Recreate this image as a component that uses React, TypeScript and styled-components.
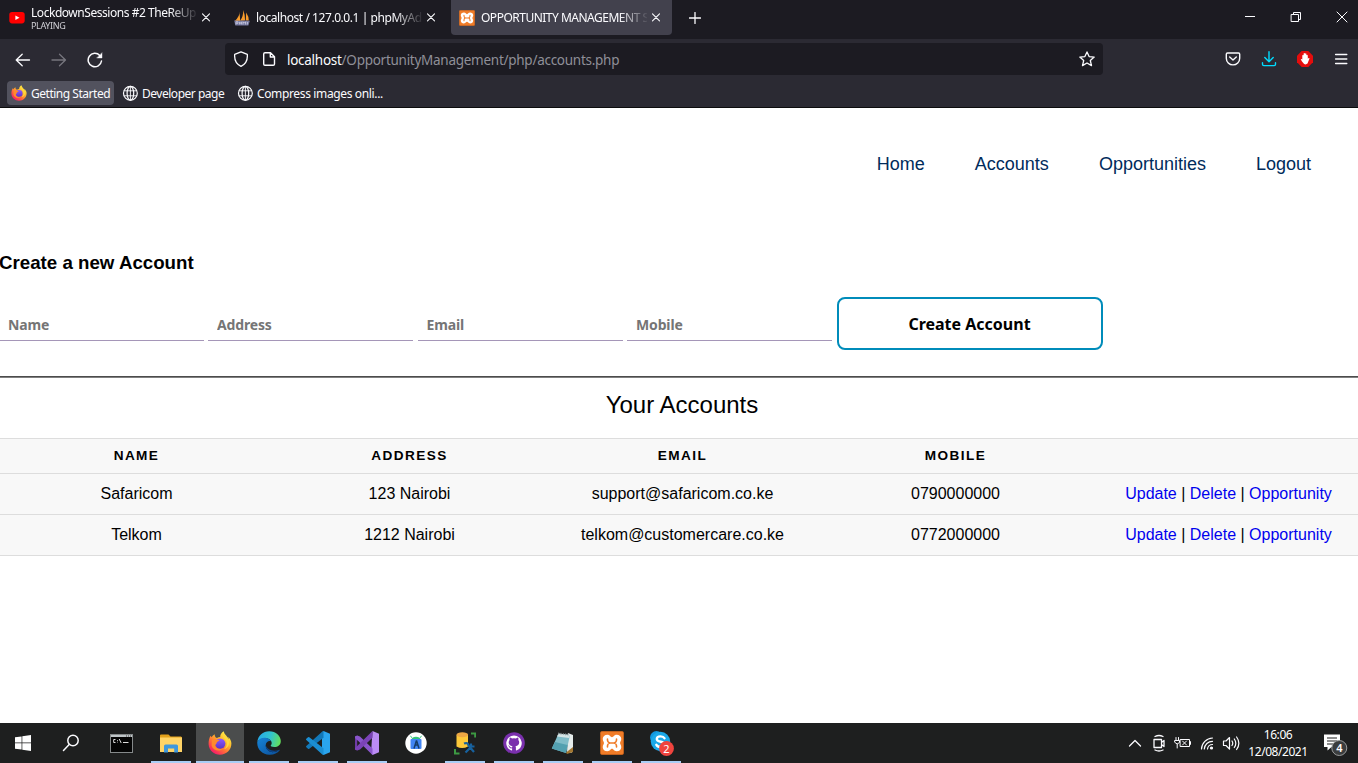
import React from "react";
import styled, { createGlobalStyle } from "styled-components";

const ui = `"Noto Sans", "Open Sans", sans-serif`;
const arial = `"Liberation Sans", Arial, sans-serif`;

const GlobalStyle = createGlobalStyle`
  *, *::before, *::after { box-sizing: border-box; }
  html, body { margin: 0; padding: 0; overflow: hidden; background: #fff; }
  svg { display: block; flex: none; }
`;

const Screen = styled.div`
  width: 1358px;
  height: 763px;
  display: flex;
  flex-direction: column;
  overflow: hidden;
  font-family: ${ui};
`;

/* ---------- browser chrome ---------- */

const Label = styled.span<{ $track?: number }>`
  white-space: pre;
  letter-spacing: ${(p) => p.$track ?? 0}px;
`;

const TabStrip = styled.div`
  height: 39px;
  flex: none;
  display: flex;
  justify-content: space-between;
  background: #1c1b22;
  color: #fbfbfe;
`;

const Tabs = styled.div`
  display: flex;
  gap: 4px;
  padding-left: 1px;
`;

const Tab = styled.div<{ $active?: boolean }>`
  width: 221px;
  height: 35px;
  padding: 0 9px 0 8px;
  display: flex;
  align-items: center;
  border-radius: 0 0 4px 4px;
  background: ${(p) => (p.$active ? "#42414d" : "transparent")};
  font-size: 12px;
`;

const TabText = styled.div<{ $fade: number }>`
  width: 166px;
  height: 35px;
  margin: 0 4px 0 6px;
  display: flex;
  flex-direction: column;
  justify-content: center;
  overflow: hidden;
  line-height: 15px;
  mask-image: linear-gradient(to right, #000 ${(p) => 166 - p.$fade}px, transparent 168px);
`;

const TabNote = styled.span`
  font-size: 9px;
  line-height: 11px;
  letter-spacing: -0.35px;
  color: #d0d0d6;
`;

const NewTab = styled.div`
  width: 37px;
  height: 35px;
  display: grid;
  place-items: center;
`;

const WindowButtons = styled.div`
  display: flex;
  align-items: center;
  gap: 34px;
  padding: 0 10px 5px 0;
`;

const NavBar = styled.div`
  height: 40px;
  flex: none;
  display: flex;
  align-items: center;
  background: #2b2a33;
  color: #fbfbfe;
`;

const NavButtons = styled.div`
  width: 225px;
  padding: 1px 0 0 15px;
  display: flex;
  gap: 20px;
`;

const UrlBar = styled.div`
  width: 878px;
  height: 32px;
  padding: 0 8px;
  display: flex;
  align-items: center;
  border-radius: 4px;
  background: #1c1b22;
`;

const Url = styled.div`
  flex: 1;
  padding: 1px 0 0 10px;
  font-size: 13.5px;
  color: #8f8f98;
  em { font-style: normal; color: #fbfbfe; }
`;

const Spacer = styled.div<{ $w: number }>`
  width: ${(p) => p.$w}px;
  flex: none;
`;

const NavActions = styled.div`
  flex: 1;
  padding-right: 9px;
  display: flex;
  justify-content: flex-end;
  gap: 20px;
`;

const Bookmarks = styled.div`
  height: 29px;
  flex: none;
  display: flex;
  align-items: flex-start;
  padding: 2px 0 0 7px;
  border-bottom: 1px solid #0c0c0d;
  background: #2b2a33;
  color: #fbfbfe;
  font-size: 12px;
`;

const Bookmark = styled.div<{ $w: number; $active?: boolean }>`
  width: ${(p) => p.$w}px;
  height: 24px;
  padding-left: 4px;
  display: flex;
  align-items: center;
  gap: 4px;
  border-radius: 4px;
  background: ${(p) => (p.$active ? "#52525e" : "transparent")};
`;

/* ---------- page ---------- */

const Page = styled.main`
  height: 615px;
  flex: none;
  overflow: hidden;
  background: #fff;
  color: #000;
  font-family: ${arial};
`;

const SiteNav = styled.nav`
  height: 112px;
  padding: 1px 47px 0 0;
  display: flex;
  justify-content: flex-end;
  align-items: center;
  gap: 50px;
  font-size: 18px;
  color: #002b5b;
`;

const FormTitle = styled.h3`
  margin: 32px 0 0 -1px;
  height: 22px;
  line-height: 22px;
  font-size: 18.72px;
`;

const AccountForm = styled.form`
  height: 79px;
  margin: 23px 0 0;
  display: flex;
  font-family: ${ui};
`;

const Field = styled.input`
  width: 205px;
  height: 32px;
  margin: 12px 4.5px 0 0;
  padding: 0 9px;
  border: 0;
  border-bottom: 1px solid #a596b8;
  outline: 0;
  background: transparent;
  font: 700 14px ${ui};
  letter-spacing: -0.15px;
  &:first-child { width: 204px; margin-right: 4px; padding: 0 8px; }
  &::placeholder { color: #757575; opacity: 1; }
`;

const SubmitButton = styled.button`
  width: 266px;
  height: 53px;
  border: 2px solid #008cba;
  border-radius: 8px;
  background: #fff;
  color: #000;
  font: 700 16px ${ui};
`;

const Rule = styled.hr`
  height: 2px;
  margin: 0;
  border: 0;
  border-top: 1px solid #4c4c4c;
  border-bottom: 1px solid #808080;
`;

const AccountsTable = styled.table`
  width: 1365px;
  table-layout: fixed;
  border-collapse: collapse;
  text-align: center;
  font-size: 16px;
  caption {
    height: 60px;
    padding-bottom: 6px;
    line-height: 54px;
    font-size: 24px;
    width: 1364px;
  }
  tr { background: #f8f8f8; border: solid #ddd; border-width: 1px 0; }
  th, td { padding: 0; }
  th {
    height: 35px;
    padding-bottom: 2px;
    font-size: 13.6px;
    letter-spacing: 1.4px;
    text-transform: uppercase;
  }
  td { height: 41px; padding-bottom: 1px; }
  a { color: #0000ee; text-decoration: none; }
`;

/* ---------- taskbar ---------- */

const Taskbar = styled.footer`
  height: 40px;
  flex: none;
  display: flex;
  background: #1e1f1f;
  color: #fff;
`;

const TaskButton = styled.div<{ $w?: number; $active?: boolean; $open?: boolean }>`
  width: ${(p) => p.$w ?? 48}px;
  height: 40px;
  margin-right: 1px;
  display: flex;
  flex-direction: column;
  align-items: center;
  background: ${(p) => (p.$active ? "#4b4d4d" : "transparent")};
  &::after {
    content: "";
    width: ${(p) => (p.$active ? 48 : 40)}px;
    height: 2px;
    background: ${(p) => (p.$open ? "#a9cdf5" : "transparent")};
  }
`;

const TaskIcon = styled.div`
  height: 38px;
  padding-top: 2px;
  display: grid;
  place-items: center;
`;

const Tray = styled.div`
  flex: 1;
  padding-right: 9px;
  display: flex;
  align-items: center;
  justify-content: flex-end;
`;

const TrayIcons = styled.div`
  display: flex;
  gap: 4px;
`;

const Clock = styled.div`
  width: 74px;
  text-align: center;
  font-size: 12px;
  line-height: 17px;
  letter-spacing: -0.45px;
  padding-bottom: 1px;
`;

/* ---------- icons ---------- */

type LineProps = { size?: number; box?: number; color?: string; width?: number; children: React.ReactNode };
const Line = ({ size = 16, box = 16, color = "#fbfbfe", width = 1.3, children }: LineProps) => (
  <svg width={size} height={size} viewBox={`0 0 ${box} ${box}`} fill="none" stroke={color} strokeWidth={width} strokeLinecap="round" strokeLinejoin="round">
    {children}
  </svg>
);

const CloseIcon = () => (
  <Line size={10} box={10} width={1.1}><path d="M1.5 0.9l7 7M8.5 0.9l-7 7" /></Line>
);

const YouTubeIcon = () => (
  <svg width="16" height="16" viewBox="0 0 16 16">
    <rect x="0.3" y="2" width="15.4" height="11.4" rx="2.8" fill="#f00" />
    <path d="M6.4 5.4v4.6L10.5 7.7z" fill="#fff" />
  </svg>
);

const PhpMyAdminIcon = () => (
  <svg width="16" height="16" viewBox="0 0 16 16">
    <path d="M5.5 1.5Q6 6 .8 11h5.400zM9.200 0Q9.500 6 6.200 10.800l4.900-.3Q11.200 5 9.200 0zM12.200 2.500q2.600 4 2.600 8h-3z" fill="#f89c2c" />
    <path d="M.2 10.600l15.600.1-1.400 4.900H1.300z" fill="#74779e" />
    <path d="M2 14.500v-2.700h2v1.500H2.300M5.600 11.800v2.600M7.400 11.800v2.600M5.600 13h1.800M9 14.500v-2.700l1.300 1.300 1.300-1.300v2.700M13.400 12v2.500" fill="none" stroke="#d0d1e4" strokeWidth=".8" />
  </svg>
);

const XamppIcon = ({ size = 16 }: { size?: number }) => (
  <svg width={size} height={size} viewBox="0 0 24 24">
    <rect x=".3" y=".3" width="23.4" height="23.4" rx="2" fill="#f07c28" stroke="#ca5f16" strokeWidth=".6" />
    <g transform="translate(12 12) scale(1.22) translate(-12 -12)">
      <path d="M8.2 5.300c2.300 0 2.500 2 3.800 2s1.500-2 3.800-2c2.200 0 3.800 1.400 3.800 3.300 0 1.800-1 2.300-1 3.400s1 1.600 1 3.400c0 1.900-1.600 3.300-3.800 3.300-2.300 0-2.500-2-3.800-2s-1.500 2-3.800 2c-2.200 0-3.800-1.400-3.800-3.300 0-1.800 1-2.300 1-3.400s-1-1.600-1-3.400c0-1.900 1.600-3.300 3.800-3.300z" fill="#fff" />
      <path d="M8.300 8.700v.9c0 1.200 1 2.400 2.200 2.400-1.200 0-2.200 1.200-2.200 2.400v.9M15.700 8.700v.9c0 1.200-1 2.400-2.200 2.400 1.200 0 2.200 1.200 2.200 2.400v.9M10.500 12h3" fill="none" stroke="#f07c28" strokeWidth="1.300" strokeLinecap="round" />
    </g>
  </svg>
);

const FirefoxIcon = ({ size, id }: { size: number; id: string }) => (
  <svg width={size} height={size} viewBox="0 0 24 24">
    <defs>
      <linearGradient id={`${id}a`} x1=".85" y1=".1" x2=".2" y2=".95">
        <stop offset="0" stopColor="#fff04a" /><stop offset=".35" stopColor="#ffb72b" />
        <stop offset=".65" stopColor="#ff6a3a" /><stop offset="1" stopColor="#f5156c" />
      </linearGradient>
      <linearGradient id={`${id}b`} x1="0" y1="0" x2="0" y2="1">
        <stop offset="0" stopColor="#9059ff" /><stop offset="1" stopColor="#5b34c4" />
      </linearGradient>
    </defs>
    <path d="M22.500 9c-.5-1.300-1.600-2.700-2.400-3.100.5 1 .8 1.900.9 2.700C19.700 5.400 16.500 4 15.600.3c-2.300 1.300-3.500 4-3.400 5.600-1.200.1-2.200.5-3.200 1.100C7 6.500 6.600 4.300 6.700 3.200 5.200 4 4 5.400 3.700 6.200L2.500 4.800C1.300 7 .5 10 .6 13.200.9 19.300 6 23.700 12 23.700c6.400 0 11.400-4.800 11.400-11.200 0-1.300-.3-2.500-.9-3.500z" fill={`url(#${id}a)`} />
    <circle cx="12.200" cy="12.600" r="5.200" fill={`url(#${id}b)`} />
    <path d="M4 8.500c3-1 4.300.4 7.500.5-.5 1.300-2 1.500-2.600 2.300-.3 1.800-1.200 1.800-1.800 3.200 1 3.400 5.500 4.500 8.400 2.400-3.500 4.500-10.500 2.800-11.900-2.500z" fill="#ff8a2c" />
    <path d="M14.200 2.500c-.4 4.500 5 5.200 4.700 10.300 0 2-1 4-3 5.200 5.700-1 6.500-7.700 3.600-11-2-2.200-4.200-2.300-5.300-4.500z" fill="#ffd83c" />
  </svg>
);

const GlobeIcon = () => (
  <Line width={1.2}><circle cx="8.400" cy="8.300" r="6.900" /><ellipse cx="8.400" cy="8.300" rx="3.300" ry="6.900" /><path d="M2.100 5.800h12.600M2.100 10.800h12.600M8.400 1.400v13.800" strokeWidth=".9" /></Line>
);

const WindowsIcon = () => (
  <svg width="16" height="16" viewBox="0 0 16 16" fill="#fff">
    <path d="M0 2.300l6.600-.9v6.200H0zM7.300 1.300L16 0v7.600H7.300zM0 8.300h6.600v6.300L0 13.700zM7.300 8.300H16V16l-8.700-1.300z" />
  </svg>
);

const TerminalIcon = () => (
  <svg width="23" height="19" viewBox="0 0 23 19">
    <rect x=".5" y=".5" width="22" height="18" fill="#050505" stroke="#85898a" />
    <path d="M1 1h21v2H1z" fill="#c0c6c8" />
    <path d="M16 2h1M18 2h1M20 2h1" stroke="#444" />
    <path d="M5.500 5.500H3.700v3h1.800M7.500 6v.8M7.500 7.800v.6M9.200 5l2 4M13 8.500h5.500" fill="none" stroke="#ddd" />
  </svg>
);

const ExplorerIcon = () => (
  <svg width="22" height="19" viewBox="0 0 22 19">
    <path d="M0 1.500Q0 .5 1 .5h7.500l2 2H21l1 1V8H0z" fill="#e3a11b" />
    <path d="M0 3.500h22V18H0z" fill="#ffd467" />
    <path d="M4 18.500V12q0-1.500 1.500-1.500h11Q18 10.500 18 12v6.500h-3.800v-4H8v4z" fill="#3f98dc" />
  </svg>
);

const EdgeIcon = () => (
  <svg width="24" height="24" viewBox="0 0 24 24">
    <defs>
      <linearGradient id="edgeTop" x1="0" y1=".3" x2="1" y2=".5"><stop offset="0" stopColor="#27a9e8" /><stop offset=".55" stopColor="#32c4cd" /><stop offset="1" stopColor="#63df5b" /></linearGradient>
      <linearGradient id="edgeLow" x1="0" y1="0" x2="1" y2="1"><stop offset="0" stopColor="#1684d8" /><stop offset="1" stopColor="#0c4f99" /></linearGradient>
    </defs>
    <path d="M.3 11C1 4.500 6 .2 12.200.2 19 .2 23.800 5 23.800 10c0 4-3 6-6.500 6-2.700 0-3.800-.8-3.600-1.500.2-.6 1-1 1-2.600 0-2.500-2.500-4.700-6.200-4.700C4 7.200 1.500 9 .3 11z" fill="url(#edgeTop)" />
    <path d="M.3 11C1.500 8 5 6.500 8.300 6.700c3 .2 5 1.800 5.800 3.600-2.500-1-5.500.8-5.400 4.200.1 4.500 4.800 7.300 8.300 6.600 1.800-.3 3.500-1 4.900-2.200.5-.4.9.1.6.6-2 2.700-5.700 4.500-10.300 4.300C5.500 23.500-.3 18.500.3 11z" fill="url(#edgeLow)" />
    <path d="M8.700 14.500c-.1 4.500 4.800 7.300 8.300 6.600 2-.3 3.700-1.200 4.900-2.200-5.500 1.700-11 .5-13.200-4.400z" fill="#0b4388" />
  </svg>
);

const VsCodeIcon = () => (
  <svg width="24" height="24" viewBox="0 0 24 24">
    <path d="M17.500 0L24 2.800v18.400L17.500 24 16 22.500V1.500z" fill="#2aa5ee" />
    <path d="M17.500 0v6.800L3.300 17.700q-.6.500-1.300 0L.3 16.200q-.6-.7 0-1.300L16.300.5z" fill="#1278b8" />
    <path d="M17.500 24v-6.800L3.300 6.300Q2.700 5.800 2 6.300L.3 7.800q-.6.700 0 1.300l16 14.400z" fill="#1b8ed2" />
  </svg>
);

const VisualStudioIcon = () => (
  <svg width="24" height="24" viewBox="0 0 24 24">
    <path d="M17.500 0L24 2.800v18.400L17.500 24 16 22z" fill="#bb8cf4" />
    <path d="M0 5.500l2.200-1v15L0 18.500z" fill="#6f3ba6" />
    <path d="M0 5.500l2.200-1L5 5.500l12.500 12V24L2.200 9v.3L0 7z" fill="#8a55cb" />
    <path d="M0 18.500l2.200 1 2.800-1L17.500 6.800V0L2.200 15 0 17z" fill="#7b43b7" />
  </svg>
);

const AndroidStudioIcon = () => (
  <svg width="22" height="22" viewBox="0 0 22 22">
    <circle cx="11" cy="11" r="10.700" fill="#fff" />
    <path d="M5.500 3.800l1.300 2M16.500 3.800l-1.300 2" stroke="#35c47b" />
    <path d="M6.300 8a4.800 4 0 019.400 0z" fill="#35c47b" />
    <rect x="5.500" y="7" width="11" height="10" rx="1" fill="#4285f4" />
    <path d="M11.500 8.500L9 16.500M11.500 8.500l2.500 8M10 13h3.500" stroke="#163d68" strokeWidth="1.500" fill="none" />
  </svg>
);

const DatabaseIcon = () => (
  <svg width="22" height="23" viewBox="0 0 22 23">
    <path d="M17 1.500h4.200v4M1 17v4.500h4.500" fill="none" stroke="#3c9a43" strokeWidth="2" />
    <path d="M2.500 3v11.500q5.500 3 11.500 0V3z" fill="#fdc93a" />
    <ellipse cx="8.300" cy="2.800" rx="5.800" ry="2.500" fill="#eda744" />
    <path d="M11.500 20.500l7-7M10 11.500q4-1.500 4.500 2l5.500 6.500M17 11.500v3h3.500" fill="none" stroke="#17619e" strokeWidth="2.200" />
  </svg>
);

const GithubIcon = () => (
  <svg width="22" height="22" viewBox="0 0 22 22">
    <circle cx="11" cy="11" r="10.800" fill="#7a30ad" />
    <path d="M11 3.500a7.700 7.700 0 00-2.500 15c.5.100.6-.2.6-.5v-1.700c-2 .4-2.700-.6-3.100-1.700-.2-.4-.7-.8-1-1 1-.2 1.600.6 2 1.200.6 1 1.400.8 2.100.5 0-.500.200-.900.400-1.100-2.500-.4-3.800-1.700-3.800-4 0-.9.400-1.700.9-2.300-.2-.8-.1-1.600.2-2.300.8 0 1.600.500 2.200.9a8 8 0 014 0c.7-.5 1.400-.9 2.200-.9.300.8.300 1.600.1 2.300.6.600.9 1.400.9 2.300 0 2.300-1.300 3.600-3.800 4 .3.300.5.700.5 1.500V18c0 .3.200.6.600.5A7.700 7.700 0 0011 3.500z" fill="#fff" />
  </svg>
);

const NotepadIcon = () => (
  <svg width="24" height="23" viewBox="0 0 24 23">
    <path d="M17 1l5 2v16.500l-2 1.500-4-1z" fill="#e6eceb" />
    <path d="M22 15v5l-6 2-1-1.500z" fill="#a17631" />
    <path d="M7.500 1.500L19 3l-4 18L.8 16.500z" fill="#80bcc8" />
    <path d="M7.500 1.500L19 3l-.8 3L6 4.500z" fill="#d5e4e5" />
    <path d="M7.700.5v2M10 .8v2M12.300 1v2M14.600 1.300v2M17 1.500v2" stroke="#8b9192" strokeWidth=".8" />
    <path d="M4 10l12.500 3L15 21 .8 16.500z" fill="#53a0b0" />
  </svg>
);

const SkypeIcon = () => (
  <svg width="26" height="26" viewBox="0 0 26 26">
    <circle cx="8.500" cy="7.500" r="6.500" fill="#1197df" />
    <circle cx="16" cy="16" r="7" fill="#1197df" />
    <circle cx="12.500" cy="11.500" r="9.700" fill="#1ba8e8" />
    <path d="M16.500 8.300Q15.500 6.400 12.500 6.400c-2.200 0-3.700 1-3.700 2.600 0 3.800 7.600 1.800 7.600 5.300 0 1.600-1.500 2.700-3.900 2.700q-3.200 0-4.200-2.200" fill="none" stroke="#fff" strokeWidth="2.400" strokeLinecap="round" />
    <circle cx="18.500" cy="18.500" r="7.400" fill="#f0443e" />
    <text x="18.500" y="22.500" textAnchor="middle" fontSize="11" fontFamily="Noto Sans" fill="#fff">2</text>
  </svg>
);

const ActionCenterIcon = () => (
  <svg width="26" height="26" viewBox="0 0 26 26">
    <path d="M1 4.500h16v12.500H8.500L4.500 20.500V17H1z" fill="#fff" />
    <path d="M4 8h10M4 11h10M4 14h7" stroke="#1e1f1f" strokeWidth="1.100" />
    <circle cx="16.300" cy="18" r="7.500" fill="#3b3d3e" stroke="#9a9c9c" />
    <text x="16.300" y="22" textAnchor="middle" fontSize="11" fontWeight="600" fontFamily="Noto Sans" fill="#fff">4</text>
  </svg>
);

/* ---------- data ---------- */

const accounts = [
  { name: "Safaricom", address: "123 Nairobi", email: "support@safaricom.co.ke", mobile: "0790000000" },
  { name: "Telkom", address: "1212 Nairobi", email: "telkom@customercare.co.ke", mobile: "0772000000" },
];

const openApps = [
  { key: "files", icon: <ExplorerIcon />, open: true },
  { key: "firefox", icon: <FirefoxIcon size={24} id="fxTask" />, open: true, active: true },
  { key: "edge", icon: <EdgeIcon />, open: true },
  { key: "code", icon: <VsCodeIcon />, open: true },
  { key: "vs", icon: <VisualStudioIcon />, open: true },
  { key: "android", icon: <AndroidStudioIcon />, open: false },
  { key: "db", icon: <DatabaseIcon />, open: true },
  { key: "github", icon: <GithubIcon />, open: true },
  { key: "notepad", icon: <NotepadIcon />, open: true },
  { key: "xampp", icon: <XamppIcon size={24} />, open: true },
  { key: "skype", icon: <SkypeIcon />, open: true },
];

export default function App() {
  return (
    <Screen>
      <GlobalStyle />
      <TabStrip>
        <Tabs>
          <Tab>
            <YouTubeIcon />
            <TabText $fade={28}>
              <Label $track={-0.46}>LockdownSessions #2 TheReUp</Label>
              <TabNote>PLAYING</TabNote>
            </TabText>
            <CloseIcon />
          </Tab>
          <Tab>
            <PhpMyAdminIcon />
            <TabText $fade={28}><Label $track={-0.44}>localhost / 127.0.0.1 | phpMyAdmin</Label></TabText>
            <CloseIcon />
          </Tab>
          <Tab $active>
            <XamppIcon />
            <TabText $fade={28}><Label $track={-0.5}>OPPORTUNITY MANAGEMENT SYSTEM</Label></TabText>
            <CloseIcon />
          </Tab>
          <NewTab><Line size={12} box={12}><path d="M6 .5v11M.5 6h11" /></Line></NewTab>
        </Tabs>
        <WindowButtons>
          <Line size={12} box={12} width={1}><path d="M1 5.500h10" strokeLinecap="butt" /></Line>
          <Line size={12} box={12} width={1}><path d="M1.500 3.500h7v7h-7zM3.500 3.500v-2h7v7h-2" /></Line>
          <Line size={12} box={12} width={1}><path d="M1 1l10 10M11 1L1 11" /></Line>
        </WindowButtons>
      </TabStrip>

      <NavBar>
        <NavButtons>
          <Line><path d="M14.500 8H1.200M7.200 2.200L1.200 8l6 5.800" /></Line>
          <Line color="#77767e"><path d="M1 8h13.500M8.500 2.200l6 5.800-6 5.800" /></Line>
          <Line width={1.500}><path d="M14.500 9A6.700 6.700 0 1112.800 3.500" /><path d="M15 1v5h-5z" fill="#fbfbfe" strokeWidth=".4" /></Line>
        </NavButtons>
        <UrlBar>
          <Line><path d="M8 .8l6.300 2.500c.5 5.500-1.500 9.700-6.300 12C3.200 13 1.200 8.800 1.700 3.300z" /></Line>
          <Spacer $w={12} />
          <Line width={1.400}><path d="M4 1.700h5.500l4 4V13q0 1.300-1.300 1.300H4Q2.700 14.300 2.700 13V3Q2.700 1.700 4 1.700zM9.300 2v4h4" /></Line>
          <Url><Label $track={-0.27}><em>localhost</em>/OpportunityManagement/php/accounts.php</Label></Url>
          <Line><path d="M8 .9l2.100 4.700 5.100.5-3.900 3.400 1.200 5.100L8 12l-4.500 2.600 1.200-5.100L.8 6.100l5.100-.5z" /></Line>
        </UrlBar>
        <NavActions>
          <Line width={1.400}><path d="M2.500 2h11q1.200 0 1.200 1.200v4A6.700 6.700 0 011.300 7.200v-4Q1.300 2 2.500 2zM4.700 6L8 9l3.300-3" /></Line>
          <Line color="#00ddff" width={1.400}><path d="M8 .7v10M3.800 6.600L8 10.700l4.200-4.100M1.500 11.800v1.500q0 1.300 1.300 1.300h10.400q1.300 0 1.300-1.300v-1.500" /></Line>
          <svg width="16" height="16" viewBox="0 0 16 16">
            <path d="M4.700 0h6.600L16 4.700v6.600L11.300 16H4.700L0 11.300V4.700z" fill="#e40d0d" />
            <path d="M5 10.500L3.700 8.300q.7-.9 1.600.2V4.300q.8-.8 1.300 0V2.500q.8-.9 1.400 0v.2q.8-.9 1.400 0v1.500q.8-.8 1.300 0l.2 3.900.6-1q1-.4 1 .5l-2 5q-2.700 2.300-5.500-2.100z" fill="#fff" />
          </svg>
          <Line size={16} width={1.400}><path d="M2.600 3.500h11.200M2.600 8h11.200M2.600 12.500h11.200" /></Line>
        </NavActions>
      </NavBar>

      <Bookmarks>
        <Bookmark $w={107} $active><FirefoxIcon size={16} id="fxMark" /><Label $track={-0.48}>Getting Started</Label></Bookmark>
        <Spacer $w={4} />
        <Bookmark $w={110}><GlobeIcon /><Label $track={-0.48}>Developer page</Label></Bookmark>
        <Spacer $w={5} />
        <Bookmark $w={156}><GlobeIcon /><Label $track={-0.36}>Compress images onli...</Label></Bookmark>
      </Bookmarks>

      <Page>
        <SiteNav>
          <span>Home</span><span>Accounts</span><span>Opportunities</span><span>Logout</span>
        </SiteNav>
        <FormTitle>Create a new Account</FormTitle>
        <AccountForm>
          <Field placeholder="Name" /><Field placeholder="Address" />
          <Field placeholder="Email" /><Field placeholder="Mobile" />
          <SubmitButton type="button">Create Account</SubmitButton>
        </AccountForm>
        <Rule />
        <AccountsTable>
          <caption>Your Accounts</caption>
          <thead>
            <tr><th>Name</th><th>Address</th><th>Email</th><th>Mobile</th><th /></tr>
          </thead>
          <tbody>
            {accounts.map((a) => (
              <tr key={a.name}>
                <td>{a.name}</td><td>{a.address}</td><td>{a.email}</td><td>{a.mobile}</td>
                <td><a>Update</a> | <a>Delete</a> | <a>Opportunity</a></td>
              </tr>
            ))}
          </tbody>
        </AccountsTable>
      </Page>

      <Taskbar>
        <TaskButton $w={46}><TaskIcon><WindowsIcon /></TaskIcon></TaskButton>
        <TaskButton $w={48}><TaskIcon><Line size={18} box={18} width={1.500}><circle cx="11" cy="6.500" r="5.200" /><path d="M7.200 10.500L1.500 16.500" /></Line></TaskIcon></TaskButton>
        <TaskButton $w={50}><TaskIcon><TerminalIcon /></TaskIcon></TaskButton>
        {openApps.map((a) => (
          <TaskButton key={a.key} $open={a.open} $active={a.active}><TaskIcon>{a.icon}</TaskIcon></TaskButton>
        ))}
        <Tray>
          <TrayIcons>
            <Line size={20} box={20} width={1.300}><path d="M4.500 13L10 7.500l5.500 5.500" /></Line>
            <Line size={20} box={20} width={1.300}><path d="M5 6.500h7.500v8H5zM12.500 9.500l2.500-2v6l-2.500-2M6 3.500q4-2 8 0M6 17q4 2 8 0" /></Line>
            <Line size={20} box={20} width={1}><path d="M7.500 6.500h9v7h-9zM16.500 8.500h1v3h-1M9.500 8l4 4M13.500 8l-4 4M2 7.500h4.500v2L4.200 11 2 9.500zM3 7V4.500M5.500 7V4.500M4.200 11v4" /></Line>
            <Line size={20} box={20} width={1.200}><path d="M4.500 16A11.500 11.500 0 0115.500 5M7.300 16A8.200 8.200 0 0115.500 8.300M10.500 16A5 5 0 0115.500 11.500" /><circle cx="14.500" cy="15" r="1" fill="#fff" /></Line>
            <Line size={20} box={20} width={1.200}><path d="M2.500 8v4.500H5l3.500 3.500V4.500L5 8zM11 8q1.500 2.200 0 4.500M13.300 6q3 4.200 0 8.500M15.600 4q4.500 6.200 0 12.500" /></Line>
          </TrayIcons>
          <Clock>16:06<br />12/08/2021</Clock>
          <Spacer $w={8} />
          <ActionCenterIcon />
        </Tray>
      </Taskbar>
    </Screen>
  );
}
